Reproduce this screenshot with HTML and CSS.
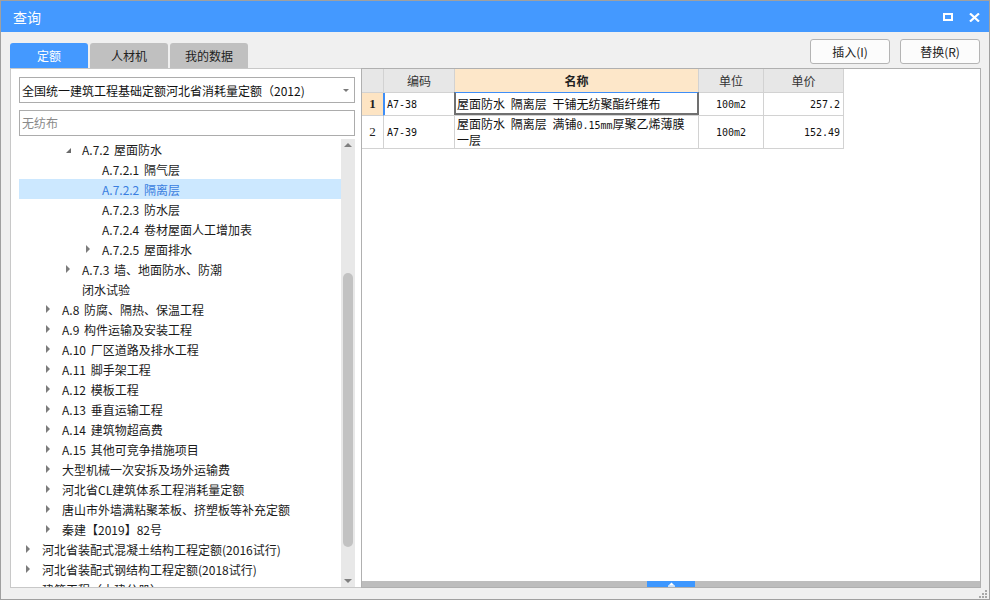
FILE: index.html
```html
<!DOCTYPE html>
<html lang="zh-CN">
<head>
<meta charset="utf-8">
<title>查询</title>
<link rel="stylesheet" href="styles.css">
</head>
<body>
<div class="window">
  <header class="titlebar">
    <span class="title">查询</span>
    <div class="win-ctrls">
      <svg class="ic" width="10" height="8" viewBox="0 0 10 8"><rect x="1" y="1" width="8" height="6" fill="none" stroke="#fff" stroke-width="2"/></svg>
      <svg class="ic" width="11" height="9" viewBox="0 0 11 9"><path d="M1 0.5 L10 8.5 M10 0.5 L1 8.5" stroke="#fff" stroke-width="2.2" fill="none"/></svg>
    </div>
  </header>
  <div class="content">
    <div class="toprow">
      <div class="tabs">
        <div class="tab active">定额</div>
        <div class="tab">人材机</div>
        <div class="tab">我的数据</div>
      </div>
      <div class="actions">
        <button class="btn">插入(I)</button>
        <button class="btn">替换(R)</button>
      </div>
    </div>
    <div class="panels">
      <section class="left">
        <div class="select"><span>全国统一建筑工程基础定额河北省消耗量定额（2012)</span><i class="caret"></i></div>
        <div class="search">无纺布</div>
        <div class="treewrap">
          <ul class="tree">
            <li class="lv2"><span class="tw e"></span>A.7.2 屋面防水</li>
            <li class="lv3"><span class="tw"></span>A.7.2.1 隔气层</li>
            <li class="lv3 sel"><span class="tw"></span>A.7.2.2 隔离层</li>
            <li class="lv3"><span class="tw"></span>A.7.2.3 防水层</li>
            <li class="lv3"><span class="tw"></span>A.7.2.4 卷材屋面人工增加表</li>
            <li class="lv3"><span class="tw c"></span>A.7.2.5 屋面排水</li>
            <li class="lv2"><span class="tw c"></span>A.7.3 墙、地面防水、防潮</li>
            <li class="lv2"><span class="tw"></span>闭水试验</li>
            <li class="lv1"><span class="tw c"></span>A.8 防腐、隔热、保温工程</li>
            <li class="lv1"><span class="tw c"></span>A.9 构件运输及安装工程</li>
            <li class="lv1"><span class="tw c"></span>A.10 厂区道路及排水工程</li>
            <li class="lv1"><span class="tw c"></span>A.11 脚手架工程</li>
            <li class="lv1"><span class="tw c"></span>A.12 模板工程</li>
            <li class="lv1"><span class="tw c"></span>A.13 垂直运输工程</li>
            <li class="lv1"><span class="tw c"></span>A.14 建筑物超高费</li>
            <li class="lv1"><span class="tw c"></span>A.15 其他可竞争措施项目</li>
            <li class="lv1"><span class="tw c"></span>大型机械一次安拆及场外运输费</li>
            <li class="lv1"><span class="tw c"></span>河北省CL建筑体系工程消耗量定额</li>
            <li class="lv1"><span class="tw c"></span>唐山市外墙满粘聚苯板、挤塑板等补充定额</li>
            <li class="lv1"><span class="tw c"></span>秦建【2019】82号</li>
            <li class="lv0"><span class="tw c"></span>河北省装配式混凝土结构工程定额(2016试行)</li>
            <li class="lv0"><span class="tw c"></span>河北省装配式钢结构工程定额(2018试行)</li>
            <li class="lv0"><span class="tw"></span>建筑工程（土建分册）</li>
          </ul>
          <div class="vscroll">
            <div class="sb-btn"><i class="tri-up"></i></div>
            <div class="track"><div class="thumb"></div></div>
            <div class="sb-btn down"><i class="tri-down"></i></div>
          </div>
        </div>
      </section>
      <section class="right">
        <div class="grid">
          <div class="hd"></div>
          <div class="hd">编码</div>
          <div class="hd hd-active">名称</div>
          <div class="hd">单位</div>
          <div class="hd">单价</div>

          <div class="rn rn-cur">1</div>
          <div class="cd cd-cur mono">A7-38</div>
          <div class="nm nm-edit">屋面防水 隔离层 干铺无纺聚酯纤维布</div>
          <div class="un mono">100m2</div>
          <div class="pr mono">257.2</div>

          <div class="rn">2</div>
          <div class="cd mono">A7-39</div>
          <div class="nm nm-wrap">屋面防水 隔离层 满铺<span class="mono">0.15mm</span>厚聚乙烯薄膜<br>一层</div>
          <div class="un mono">100m2</div>
          <div class="pr mono">152.49</div>
        </div>
        <div class="hsplit">
          <div class="handle"><svg width="7" height="5" viewBox="0 0 7 5"><path d="M3.5 0.5 L6.5 3.5 L0.5 3.5 Z" fill="#fff"/><rect x="0" y="3.5" width="7" height="1.2" fill="#fff"/></svg></div>
        </div>
      </section>
    </div>
    <div class="statusbar">
      <svg class="grip" width="8" height="8" viewBox="0 0 8 8" fill="#a8a8a8">
        <rect x="6" y="0" width="2" height="2"/>
        <rect x="3" y="3" width="2" height="2"/><rect x="6" y="3" width="2" height="2"/>
        <rect x="0" y="6" width="2" height="2"/><rect x="3" y="6" width="2" height="2"/><rect x="6" y="6" width="2" height="2"/>
      </svg>
    </div>
  </div>
</div>
</body>
</html>
```

FILE: styles.css
```css
* { box-sizing: border-box; margin: 0; padding: 0; }
html, body { width: 990px; height: 600px; overflow: hidden; background: #f0f0f0; }
body {
  font-family: "Noto Sans CJK SC", "Noto Sans", sans-serif;
  font-size: 12px;
  color: #1e1e1e;
}
.window {
  width: 990px;
  height: 600px;
  border: 1px solid #a0a0a0;
  background: #f0f0f0;
  display: flex;
  flex-direction: column;
}
.titlebar {
  height: 31px;
  flex: none;
  background: #4499ff;
  color: #fff;
  display: flex;
  align-items: center;
  justify-content: space-between;
  padding: 0 9px 0 12px;
}
.title { font-size: 14px; line-height: 20px; }
.win-ctrls { display: flex; align-items: center; gap: 16px; padding-top: 1px; }
.ic { display: block; }

.content {
  flex: 1;
  display: flex;
  flex-direction: column;
  padding: 0 8px 0 9px;
}
.toprow {
  height: 36px;
  flex: none;
  display: flex;
  justify-content: space-between;
}
.tabs { display: flex; gap: 2px; align-self: flex-end; }
.tab {
  width: 78px;
  height: 25px;
  line-height: 25px;
  text-align: center;
  background: #c0c0c0;
  color: #222;
  border-radius: 3px 3px 0 0;
}
.tab.active { background: #4499ff; color: #fff; }
.actions { display: flex; gap: 10px; padding-top: 7px; margin-right: 1px; }
.btn {
  width: 80px;
  height: 25px;
  border: 1px solid #b4b4b4;
  background: #fcfcfc;
  border-radius: 3px;
  font: inherit;
  color: #222;
}

.panels { height: 520px; flex: none; display: flex; }
.left {
  width: 351px;
  flex: none;
  border: 1px solid #c8c8c8;
  border-right: none;
  background: #fff;
  padding: 8px 6px 0 8px;
  display: flex;
  flex-direction: column;
}
.select {
  height: 26px;
  flex: none;
  border: 1px solid #acacac;
  display: flex;
  align-items: center;
  justify-content: space-between;
  padding: 0 5px 0 2px;
  color: #111;
}
.caret {
  border-top: 3px solid #7a7a7a;
  border-left: 3px solid transparent;
  border-right: 3px solid transparent;
}
.search {
  height: 26px;
  flex: none;
  margin-top: 7px;
  border: 1px solid #acacac;
  color: #8a8a8a;
  padding-left: 2px;
  line-height: 24px;
}
.treewrap {
  height: 448px;
  flex: none;
  margin-top: 3px;
  display: flex;
  overflow: hidden;
}
.tree { flex: 1; list-style: none; overflow: hidden; word-spacing: 2px; }
.tree li {
  height: 20px;
  display: flex;
  align-items: center;
  white-space: pre;
  color: #1a1a1a;
}
.lv0 { padding-left: 7px; }
.lv1 { padding-left: 27px; }
.lv2 { padding-left: 47px; }
.lv3 { padding-left: 67px; }
.tw { width: 16px; flex: none; display: flex; align-items: center; height: 20px; }
.tw.c::before {
  content: "";
  border-left: 4px solid #7c7c7c;
  border-top: 4px solid transparent;
  border-bottom: 4px solid transparent;
}
.tw.e::before {
  content: "";
  border-right: 5px solid #6a6a6a;
  border-top: 5px solid transparent;
  margin-top: 3px;
}
.tree li.sel { background: #cce8ff; color: #3a7ee0; }

.vscroll {
  width: 14px;
  flex: none;
  background: #e8e8e8;
  display: flex;
  flex-direction: column;
}
.sb-btn { height: 14px; flex: none; display: flex; justify-content: center; align-items: flex-start; padding-top: 4px; }
.sb-btn.down { align-items: flex-end; padding-top: 0; padding-bottom: 4px; }
.tri-up { border-bottom: 4px solid #7f7f7f; border-left: 4px solid transparent; border-right: 4px solid transparent; }
.tri-down { border-top: 4px solid #7f7f7f; border-left: 4px solid transparent; border-right: 4px solid transparent; }
.track { flex: 1; padding: 120px 2px 0; }
.thumb { height: 274px; background: #c2c2c2; border-radius: 5px; }

.right {
  flex: 1;
  border: 1px solid #b0b0b0;
  background: #fff;
  display: flex;
  flex-direction: column;
}
.grid {
  flex: 1;
  display: grid;
  grid-template-columns: 22px 71px 244px 65px 80px;
  grid-template-rows: 24px 23px 33px;
  align-content: start;
}
.grid > div {
  border-right: 1px solid #d2d2d2;
  border-bottom: 1px solid #d2d2d2;
}
.hd {
  background: #e7e7e7;
  text-align: center;
  line-height: 23px;
  color: #333;
}
.hd-active { background: #fde7c9; font-weight: bold; color: #222; }
.mono { font-family: "DejaVu Sans Mono", "Liberation Mono", monospace; font-size: 10px; }
.rn {
  font-family: "Liberation Serif", serif;
  font-size: 13px;
  display: flex;
  align-items: center;
  justify-content: center;
}
.rn-cur { background: #fde4c3; font-weight: bold; }
.grid > .rn-cur { border-right-color: #3e8ef7; }
.cd { display: flex; align-items: center; padding-left: 3px; color: #111; }
.cd-cur { box-shadow: inset 1px 0 0 #3e8ef7; }
.nm { padding: 0 2px; color: #111; word-spacing: 3px; }
.nm-edit { position: relative; line-height: 22px; }
.nm-edit::after {
  content: "";
  position: absolute;
  top: -1px;
  left: -1px;
  right: -1px;
  bottom: 0;
  border: 2px solid #707070;
  border-top: 1px solid #3e8ef7;
}
.nm-wrap { line-height: 14px; padding-top: 1px; }
.nm-wrap .mono { font-size: 10px; }
.un { display: flex; align-items: center; justify-content: center; color: #111; }
.pr { display: flex; align-items: center; justify-content: flex-end; padding-right: 3px; color: #111; }

.hsplit {
  height: 6px;
  flex: none;
  background: #bdbdbd;
  display: flex;
  justify-content: center;
}
.handle {
  width: 48px;
  background: #3d97ff;
  display: flex;
  align-items: center;
  justify-content: center;
}
.handle svg { display: block; }

.statusbar {
  flex: 1;
  display: flex;
  justify-content: flex-end;
  align-items: flex-end;
  margin-right: -6px;
  padding-bottom: 1px;
}
.grip { display: block; }
```
